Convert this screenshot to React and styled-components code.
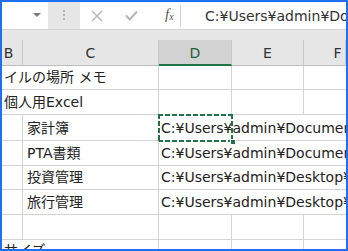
import React from 'react'
import styled, { createGlobalStyle } from 'styled-components'

const GlobalStyle = createGlobalStyle`
  html, body {
    margin: 0;
    padding: 0;
    background: #fff;
  }
  * {
    box-sizing: border-box;
  }
`

const FONT = `"DejaVu Sans", "Noto Sans CJK JP", sans-serif`
const GRID = '#d4d4d4'
const GREEN = '#217346'
const COLS = '21px 136px 73px 72px 1fr'

const rows = [
  { h: 24, kind: 'wide', text: 'イルの場所 メモ' },
  { h: 25, kind: 'wide', text: '個人用Excel' },
  { h: 26, kind: 'item', label: '家計簿', path: 'C:¥Users¥admin¥Documents¥家計簿.xlsx', selected: true },
  { h: 25, kind: 'item', label: 'PTA書類', path: 'C:¥Users¥admin¥Documents¥PTA書類.xlsx' },
  { h: 24, kind: 'item', label: '投資管理', path: 'C:¥Users¥admin¥Desktop¥投資管理.xlsx' },
  { h: 25, kind: 'item', label: '旅行管理', path: 'C:¥Users¥admin¥Desktop¥旅行管理.xlsx' },
  { h: 25, kind: 'empty' },
  { h: 12, kind: 'wide', text: 'サイズ' },
]

const App = () => {
  return (
    <Frame>
      <GlobalStyle />
      <Toolbar>
        <NameBox>
          <Caret />
        </NameBox>
        <Grip>
          <Dot />
          <Dot />
          <Dot />
        </Grip>
        <FormulaArea>
          <ToolButton>
            <svg width="12" height="12" viewBox="0 0 12 12">
              <path d="M1 1 L11 11 M11 1 L1 11" stroke="#b4b4b4" strokeWidth="1.4" fill="none" />
            </svg>
          </ToolButton>
          <ToolButton>
            <svg width="13" height="11" viewBox="0 0 13 11">
              <path d="M1 5.5 L4.8 9.5 L12 1.5" stroke="#b4b4b4" strokeWidth="2" fill="none" />
            </svg>
          </ToolButton>
          <FxButton>
            f<sub>x</sub>
          </FxButton>
          <Divider />
          <FormulaText>C:¥Users¥admin¥Documents¥家計簿.xlsx</FormulaText>
        </FormulaArea>
      </Toolbar>
      <Band />
      <HeaderRow>
        <HeaderCell $pr={7}>B</HeaderCell>
        <HeaderCell>C</HeaderCell>
        <HeaderCell $active>D</HeaderCell>
        <HeaderCell>E</HeaderCell>
        <HeaderCell $pl={26}>F</HeaderCell>
      </HeaderRow>
      {rows.map((r, i) => {
        if (r.kind === 'wide') {
          return (
            <Row key={i} $h={r.h}>
              <Cell $span={2} $pl={2}>{r.text}</Cell>
              <Cell />
              <Cell />
              <Cell />
            </Row>
          )
        }
        if (r.kind === 'item') {
          return (
            <Row key={i} $h={r.h}>
              <Cell />
              <Cell $pl={4}>{r.label}</Cell>
              <Cell $span={3} $pl={2}>
                {r.path}
                {r.selected && (
                  <Selection>
                    <Handle />
                  </Selection>
                )}
              </Cell>
            </Row>
          )
        }
        return (
          <Row key={i} $h={r.h}>
            <Cell />
            <Cell />
            <Cell />
            <Cell />
            <Cell />
          </Row>
        )
      })}
    </Frame>
  )
}

const Frame = styled.div`
  width: 348px;
  height: 251px;
  border: 2px solid #1f6ff0;
  background: #fff;
  overflow: hidden;
  display: flex;
  flex-direction: column;
  font-family: ${FONT};
`

const Toolbar = styled.div`
  height: 28px;
  flex: none;
  display: flex;
  background: #e6e6e6;
  border-bottom: 1px solid #d2d2d2;
`

const NameBox = styled.div`
  width: 46px;
  background: #fff;
  display: flex;
  align-items: center;
  justify-content: flex-end;
  padding-right: 7px;
`

const Caret = styled.span`
  width: 0;
  height: 0;
  border-left: 4px solid transparent;
  border-right: 4px solid transparent;
  border-top: 4px solid #7a7a7a;
  margin-bottom: 2px;
`

const Grip = styled.div`
  width: 32px;
  display: flex;
  flex-direction: column;
  align-items: center;
  justify-content: center;
  gap: 2px;
  padding-bottom: 1px;
`

const Dot = styled.span`
  width: 2px;
  height: 2px;
  background: #b5b5b5;
`

const FormulaArea = styled.div`
  flex: 1;
  background: #fff;
  display: flex;
  align-items: center;
  overflow: hidden;
`

const ToolButton = styled.div`
  width: 34px;
  height: 100%;
  display: flex;
  align-items: center;
  justify-content: center;
  flex: none;
`

const FxButton = styled.div`
  width: 32px;
  flex: none;
  padding-left: 17px;
  font-family: "Liberation Serif", serif;
  font-style: italic;
  font-size: 15px;
  color: #555;
  line-height: 1;
  padding-bottom: 3px;
  sub {
    font-size: 10px;
    vertical-align: -1px;
  }
`

const Divider = styled.div`
  width: 1px;
  height: 22px;
  background: #d4d4d4;
  flex: none;
`

const FormulaText = styled.div`
  padding-left: 24px;
  font-size: 14px;
  color: #333;
  white-space: nowrap;
  padding-bottom: 1px;
`

const Band = styled.div`
  height: 10px;
  flex: none;
  background: #e6e6e6;
`

const HeaderRow = styled.div`
  height: 26px;
  flex: none;
  display: grid;
  grid-template-columns: ${COLS};
  background: #e6e6e6;
`

const HeaderCell = styled.div`
  display: flex;
  align-items: center;
  justify-content: center;
  padding-right: ${(p) => p.$pr || 0}px;
  padding-left: ${(p) => p.$pl || 0}px;
  font-size: 14px;
  color: ${(p) => (p.$active ? '#1d5e3a' : '#333')};
  background: ${(p) => (p.$active ? '#d2d2d2' : 'transparent')};
  border-right: 1px solid #c8c8c8;
  border-bottom: ${(p) => (p.$active ? `2px solid ${GREEN}` : '1px solid #bdbdbd')};
  padding-top: ${(p) => (p.$active ? 1 : 0)}px;
`

const Row = styled.div`
  height: ${(p) => p.$h}px;
  flex: none;
  display: grid;
  grid-template-columns: ${COLS};
`

const Cell = styled.div`
  position: relative;
  grid-column: span ${(p) => p.$span || 1};
  display: flex;
  align-items: flex-end;
  padding-left: ${(p) => p.$pl || 0}px;
  padding-bottom: 2px;
  border-right: 1px solid ${GRID};
  border-bottom: 1px solid ${GRID};
  font-size: 14px;
  line-height: 20px;
  color: #222;
  white-space: nowrap;
  &:last-child {
    border-right: none;
  }
`

const ants = (dir) =>
  `repeating-linear-gradient(${dir}, ${GREEN} 0 5px, #fff 5px 7px)`

const Selection = styled.div`
  position: absolute;
  left: -1px;
  top: -1px;
  width: 75px;
  height: 28px;
  background: ${ants('90deg')} top left / 100% 2px no-repeat,
    ${ants('90deg')} bottom left / 100% 2px no-repeat,
    ${ants('180deg')} top left / 2px 100% no-repeat,
    ${ants('180deg')} top right / 2px 100% no-repeat;
`

const Handle = styled.div`
  position: absolute;
  right: -3px;
  bottom: -3px;
  width: 6px;
  height: 6px;
  background: ${GREEN};
  border: 1px solid #fff;
`

export default App
